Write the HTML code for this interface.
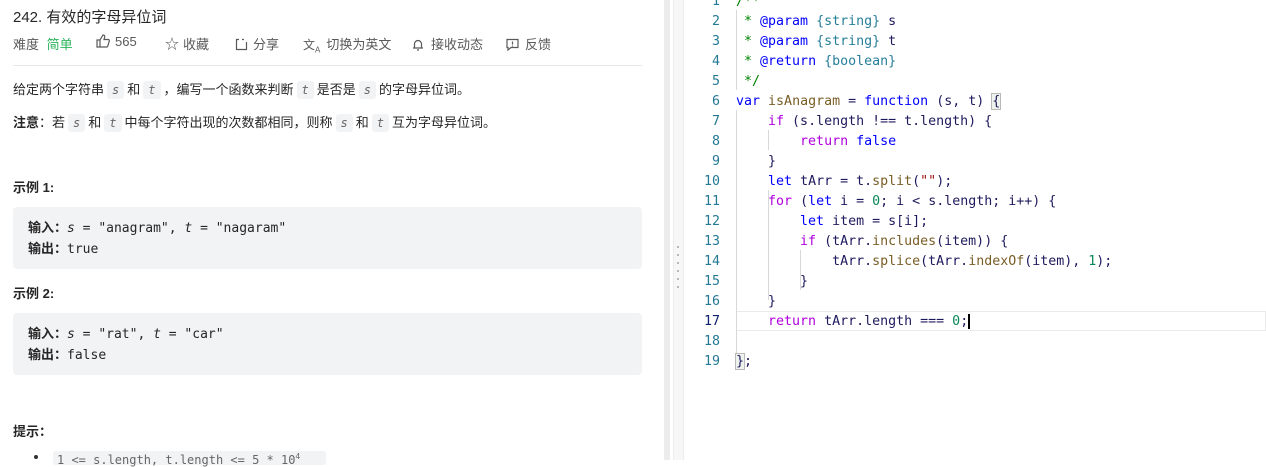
<!DOCTYPE html>
<html><head><meta charset="utf-8"><style>
*{margin:0;padding:0;box-sizing:border-box}
body{width:1266px;height:460px;overflow:hidden;background:#fff;font-family:"Liberation Sans","Noto Sans CJK SC",sans-serif;color:#262626;position:relative}
.abs{position:absolute;white-space:nowrap}
.meta{font-size:13px;color:#595959;top:34px}
.c{display:inline-block;background:#f2f3f5;border-radius:3px;font-family:"DejaVu Sans Mono",monospace;font-size:12px;color:#666;padding:2px 5px;margin:0 3px;font-style:italic}
.p{font-size:13px;color:#262626}
.box{position:absolute;left:13px;width:629px;background:#f2f3f5;border-radius:4px}
.box div{position:absolute;left:15px;font-size:13px;font-family:"DejaVu Sans Mono","Noto Sans CJK SC",monospace}
.box b{font-family:"Liberation Sans","Noto Sans CJK SC",sans-serif}
.ln{position:absolute;right:546px;width:40px;text-align:right;font-family:"DejaVu Sans Mono",monospace;font-size:13.3px;color:#237893;line-height:20px}
.code{position:absolute;left:736px;font-family:"DejaVu Sans Mono",monospace;font-size:13.3px;line-height:20px;color:#1f1a5e;white-space:pre}
.cm{color:#008000}.tg{color:#0000ff}.ty{color:#267f99}.kw{color:#0000ff}.ct{color:#af00db}.fn{color:#795e26}.nu{color:#098658}.st{color:#a31515}
.g{position:absolute;width:1px;background:#d8d8d8}
</style></head><body>
<div class="abs" style="left:13px;top:6px;font-size:15px;color:#262626">242. 有效的字母异位词</div>
<div class="abs meta" style="left:13px">难度 <span style="color:#2db55d;margin-left:4px">简单</span></div>
<div class="abs meta" style="left:96px"><svg width="14" height="14" viewBox="0 0 14 14" style="vertical-align:-2px;margin-right:5px"><path d="M1 6h3v7H1zM4 6l3-5c1.5 0 2 1 1.6 2.5L8 5.5h4.2c.8 0 1.3.7 1.1 1.4l-1.5 5.2c-.2.5-.6.9-1.2.9H4" fill="none" stroke="#595959" stroke-width="1.2"/></svg>565</div>
<div class="abs meta" style="left:165px"><span style="font-size:14px;margin-right:4px">☆</span>收藏</div>
<div class="abs meta" style="left:235px"><svg width="13" height="13" viewBox="0 0 13 13" style="vertical-align:-2px;margin-right:5px"><path d="M4 1.5H1.5v10h10V4M7 1.5h2" fill="none" stroke="#595959" stroke-width="1.2"/></svg>分享</div>
<div class="abs meta" style="left:303px"><span style="font-size:12px;margin-right:6px">文<sub style="font-size:8px">A</sub></span>切换为英文</div>
<div class="abs meta" style="left:412px"><svg width="12" height="13" viewBox="0 0 12 13" style="vertical-align:-2px;margin-right:7px"><path d="M2.5 10V6a3.5 3.5 0 017 0v4M1 10h10M5 12h2" fill="none" stroke="#595959" stroke-width="1.2"/></svg>接收动态</div>
<div class="abs meta" style="left:506px"><svg width="13" height="13" viewBox="0 0 13 13" style="vertical-align:-2px;margin-right:6px"><path d="M1 1.5h11v8H5l-3 2.5V9.5H1z M6.5 3.5v3M6.5 7.5v1" fill="none" stroke="#595959" stroke-width="1.2"/></svg>反馈</div>
<div class="abs" style="left:13px;top:65px;width:629px;height:1px;background:#e8e8e8"></div>
<div class="abs p" style="left:13px;top:79px">给定两个字符串<span class="c">s</span>和<span class="c">t</span>，编写一个函数来判断<span class="c">t</span>是否是<span class="c">s</span>的字母异位词。</div>
<div class="abs p" style="left:13px;top:112px"><b>注意</b>：若<span class="c">s</span>和<span class="c">t</span>中每个字符出现的次数都相同，则称<span class="c">s</span>和<span class="c">t</span>互为字母异位词。</div>
<div class="abs p" style="left:13px;top:177px"><b>示例 1:</b></div>
<div class="box" style="top:207px;height:62px"><div style="top:10px"><b>输入：</b><i>s</i> = "anagram", <i>t</i> = "nagaram"</div><div style="top:31px"><b>输出：</b>true</div></div>
<div class="abs p" style="left:13px;top:283px"><b>示例 2:</b></div>
<div class="box" style="top:313px;height:62px"><div style="top:10px"><b>输入：</b><i>s</i> = "rat", <i>t</i> = "car"</div><div style="top:31px"><b>输出：</b>false</div></div>
<div class="abs p" style="left:13px;top:421px"><b>提示：</b></div>
<div class="abs" style="left:34px;top:455px;width:4px;height:4px;border-radius:2px;background:#333"></div>
<div class="abs" style="left:53px;top:451px;width:273px;height:14px;background:#f2f3f5;border-radius:3px;font-family:'DejaVu Sans Mono',monospace;font-size:12px;color:#666;padding:1px 4px">1 &lt;= s.length, t.length &lt;= 5 * 10<sup style="font-size:8px">4</sup></div>
<div class="abs" style="left:664px;top:0;width:6px;height:460px;background:#ececec"></div>
<div class="abs" style="left:673px;top:0;width:10px;height:460px;background:#f7f7f7;border-left:1px solid #ececec"></div>
<div class="abs" style="left:677px;top:246px;width:2px;height:44px;background:repeating-linear-gradient(#bbb 0 2px,transparent 2px 8px)"></div>
<div class="abs" style="left:683px;top:0;width:1px;height:460px;background:#ececec"></div>
<div class="abs" style="left:737px;top:311px;width:529px;height:20px;border:1px solid #eaeaea;border-left:none"></div>
<div class="g" style="left:736px;top:10px;height:80px"></div>
<div class="g" style="left:736px;top:110px;height:250px"></div>
<div class="g" style="left:768px;top:130px;height:20px"></div>
<div class="g" style="left:768px;top:190px;height:110px"></div>
<div class="g" style="left:800px;top:250px;height:40px"></div>
<div class="ln" style="top:-8px;left:680px">1<br>2<br>3<br>4<br>5<br>6<br>7<br>8<br>9<br>10<br>11<br>12<br>13<br>14<br>15<br>16<br><span style="color:#0b216f">17</span><br>18<br>19</div>
<div class="code" style="top:-8px"><span class="cm">/**</span>
<span class="cm"> * <span class="tg">@param</span> <span class="ty">{string}</span> <span style="color:#1f1a5e">s</span></span>
<span class="cm"> * <span class="tg">@param</span> <span class="ty">{string}</span> <span style="color:#1f1a5e">t</span></span>
<span class="cm"> * <span class="tg">@return</span> <span class="ty">{boolean}</span></span>
<span class="cm"> */</span>
<span class="kw">var</span> <span class="fn">isAnagram</span> = <span class="kw">function</span> (s, t) <span style="outline:1px solid #b9b9b9;background:#eef3ee">{</span>
    <span class="ct">if</span> (s.length !== t.length) {
        <span class="ct">return</span> <span class="kw">false</span>
    }
    <span class="kw">let</span> tArr = t.<span class="fn">split</span>(<span class="st">""</span>);
    <span class="ct">for</span> (<span class="kw">let</span> i = <span class="nu">0</span>; i &lt; s.length; i++) {
        <span class="kw">let</span> item = s[i];
        <span class="ct">if</span> (tArr.<span class="fn">includes</span>(item)) {
            tArr.<span class="fn">splice</span>(tArr.<span class="fn">indexOf</span>(item), <span class="nu">1</span>);
        }
    }
    <span class="ct">return</span> tArr.length === <span class="nu">0</span>;<span style="border-left:2px solid #000;margin-left:0"></span>

<span style="outline:1px solid #b9b9b9;background:#eef3ee">}</span>;</div>
</body></html>
